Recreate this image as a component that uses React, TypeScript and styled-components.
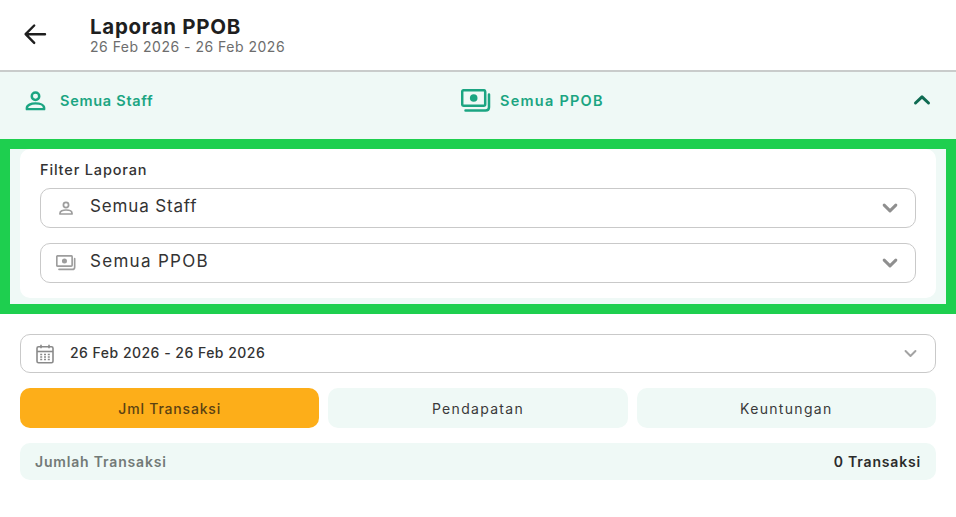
import React from "react";
import styled, { createGlobalStyle } from "styled-components";

const GlobalStyle = createGlobalStyle`
  html, body {
    margin: 0;
    padding: 0;
    background: #fff;
  }
  body {
    font-family: "Inter", "Liberation Sans", sans-serif;
  }
`;

const Page = styled.div`
  width: 956px;
  height: 517px;
  overflow: hidden;
  background: #fff;
`;

const Header = styled.header`
  height: 72px;
  display: flex;
  align-items: center;
  padding-left: 23px;
  box-sizing: border-box;
  border-bottom: 2px solid #c9cccb;
`;

const BackButton = styled.div`
  width: 24px;
  height: 24px;
  margin-right: 43px;
  margin-top: -3px;
  color: #1e1e1e;
`;

const HeaderText = styled.div`
  display: flex;
  flex-direction: column;
  margin-top: -1px;
`;

const Title = styled.div`
  font-size: 20.5px;
  line-height: 25px;
  font-weight: 700;
  color: #1f1f1f;
  letter-spacing: 0.72px;
`;

const Subtitle = styled.div`
  font-size: 14px;
  line-height: 16px;
  font-weight: 400;
  color: #6d6d6d;
  letter-spacing: 0.5px;
`;

const SummaryBar = styled.div`
  height: 67px;
  background: #eff9f6;
  display: flex;
  align-items: center;
  padding: 0 24px;
  box-sizing: border-box;
`;

const SummaryItem = styled.div<{ $width: number; $gap: number; $spacing: number }>`
  width: ${(p) => p.$width}px;
  display: flex;
  align-items: center;
  gap: ${(p) => p.$gap}px;
  color: #1ba582;
  font-size: 14.5px;
  font-weight: 600;
  letter-spacing: ${(p) => p.$spacing}px;
  margin-top: -10px;
`;

const Collapse = styled.div`
  margin-left: auto;
  margin-right: 0;
  margin-top: -11px;
  color: #0f6b52;
  width: 20px;
  height: 20px;
`;

const Frame = styled.section`
  height: 175px;
  box-sizing: border-box;
  border: 10px solid #1ecf4f;
  background: #eff9f6;
  padding: 0 10px 6px;
`;

const FilterCard = styled.div`
  height: 100%;
  box-sizing: border-box;
  background: #fff;
  border-radius: 10px;
  padding: 11px 20px 0;
`;

const FilterLabel = styled.div`
  font-size: 14.5px;
  line-height: 19px;
  font-weight: 500;
  color: #333;
  letter-spacing: 0.85px;
  margin-bottom: 9px;
`;

const Select = styled.div<{ $gap?: number; $pad?: number; $height?: number }>`
  height: ${(p) => p.$height ?? 40}px;
  box-sizing: border-box;
  border: 1.5px solid #c9c9c9;
  border-radius: 10px;
  background: #fff;
  display: flex;
  align-items: center;
  padding: 0 ${(p) => p.$pad ?? 15}px 0 14px;
  margin-bottom: ${(p) => p.$gap ?? 0}px;
`;

const SelectIcon = styled.div`
  width: 22px;
  height: 20px;
  color: #9d9d9d;
  display: flex;
  align-items: center;
  justify-content: center;
  margin-right: 13px;
`;

const SelectText = styled.div<{ $spacing: number }>`
  flex: 1;
  font-size: 17px;
  color: #333;
  letter-spacing: ${(p) => p.$spacing}px;
  margin-top: -5px;
`;

const Chevron = styled.div<{ $size: number; $color: string }>`
  width: ${(p) => p.$size}px;
  height: ${(p) => p.$size}px;
  color: ${(p) => p.$color};
`;

const Content = styled.div`
  padding: 20px 20px 0;
`;

const DateText = styled.div`
  flex: 1;
  font-size: 14px;
  font-weight: 500;
  color: #333;
  letter-spacing: 0.48px;
  margin-top: -2px;
`;

const DateIcon = styled(SelectIcon)`
  width: 20px;
  margin-right: 15px;
  color: #8a8a8a;
`;

const Tabs = styled.div`
  display: grid;
  grid-template-columns: repeat(3, 1fr);
  gap: 9px;
  margin: 15px 0;
`;

const Tab = styled.div<{ $active?: boolean }>`
  height: 40px;
  border-radius: 10px;
  display: flex;
  align-items: center;
  justify-content: center;
  font-size: 14px;
  font-weight: ${(p) => (p.$active ? 500 : 400)};
  letter-spacing: ${(p) => (p.$active ? 0.8 : 1.3)}px;
  background: ${(p) => (p.$active ? "#fdae19" : "#eff9f6")};
  color: ${(p) => (p.$active ? "#5b4212" : "#3a3a3a")};
`;

const TotalRow = styled.div`
  height: 37px;
  border-radius: 10px;
  background: #eff9f6;
  display: flex;
  align-items: center;
  justify-content: space-between;
  padding: 0 15px;
  font-size: 14px;
  letter-spacing: 0.82px;
`;

const TotalLabel = styled.span`
  font-weight: 600;
  color: #727a77;
`;

const TotalValue = styled.span`
  font-weight: 600;
  color: #2b2b2b;
`;

const PersonIcon = ({ size }: { size: number }) => (
  <svg width={size} height={size} viewBox="0 0 24 24" fill="none" stroke="currentColor" strokeWidth="2.6">
    <circle cx="12" cy="7.5" r="3.9" />
    <path d="M3 21v-1.2c0-3.2 4.4-4.8 9-4.8s9 1.6 9 4.8V21H3z" strokeLinejoin="round" />
  </svg>
);

const MoneyIcon = ({ width }: { width: number }) => (
  <svg width={width} height={width * 0.8} viewBox="0 0 30 24" fill="none" stroke="currentColor" strokeWidth="2.5">
    <rect x="1.2" y="1.2" width="23" height="15.6" rx="1.5" />
    <circle cx="12.7" cy="9" r="3.8" fill="currentColor" stroke="none" />
    <path d="M4.5 21.6h20c2 0 3.500-1.300 3.500-3.400V5.500" strokeLinecap="round" />
  </svg>
);

const CalendarIcon = () => (
  <svg width="18" height="20" viewBox="0 0 18 20" fill="none" stroke="currentColor">
    <rect x="1" y="2.8" width="16" height="16" rx="1.5" strokeWidth="1.6" />
    <path d="M1 7.5h16" strokeWidth="1.6" />
    <path d="M5 .8v3.4M13 .8v3.4" strokeWidth="1.6" />
    <path d="M4.2 10.5h2M8 10.500h2M11.800 10.500h2M4.200 13h2M8 13h2M11.800 13h2M4.200 15.500h2M8 15.500h2M11.800 15.500h2" strokeWidth="1.5" />
  </svg>
);

const ChevronDown = ({ weight }: { weight: number }) => (
  <svg width="100%" height="100%" viewBox="0 0 24 24" fill="none" stroke="currentColor" strokeWidth={weight} strokeLinecap="round" strokeLinejoin="round">
    <path d="M5 8.5l7 7 7-7" />
  </svg>
);

export default function App() {
  return (
    <>
      <GlobalStyle />
      <Page>
        <Header>
          <BackButton>
            <svg width="24" height="24" viewBox="0 0 24 24" fill="none" stroke="currentColor" strokeWidth="2.4" strokeLinecap="round" strokeLinejoin="round">
              <path d="M22 12.200H3M11.200 3.500L2.600 12.200l8.600 8.700" />
            </svg>
          </BackButton>
          <HeaderText>
            <Title>Laporan PPOB</Title>
            <Subtitle>26 Feb 2026 - 26 Feb 2026</Subtitle>
          </HeaderText>
        </Header>
        <SummaryBar>
          <SummaryItem $width={437} $gap={13} $spacing={0.72}>
            <PersonIcon size={23} />
            Semua Staff
          </SummaryItem>
          <SummaryItem $width={300} $gap={9} $spacing={1.25}>
            <MoneyIcon width={30} />
            Semua PPOB
          </SummaryItem>
          <Collapse>
            <svg width="20" height="20" viewBox="0 0 20 20" fill="none" stroke="currentColor" strokeWidth="3" strokeLinecap="round" strokeLinejoin="round">
              <path d="M3.500 13L10 6.800l6.500 6.200" />
            </svg>
          </Collapse>
        </SummaryBar>
        <Frame>
          <FilterCard>
            <FilterLabel>Filter Laporan</FilterLabel>
            <Select $gap={15}>
              <SelectIcon><PersonIcon size={16} /></SelectIcon>
              <SelectText $spacing={0.85}>Semua Staff</SelectText>
              <Chevron $size={20} $color="#8f8f8f"><ChevronDown weight={3.6} /></Chevron>
            </Select>
            <Select>
              <SelectIcon><MoneyIcon width={20} /></SelectIcon>
              <SelectText $spacing={1.3}>Semua PPOB</SelectText>
              <Chevron $size={20} $color="#8f8f8f"><ChevronDown weight={3.6} /></Chevron>
            </Select>
          </FilterCard>
        </Frame>
        <Content>
          <Select $pad={16} $height={39}>
            <DateIcon><CalendarIcon /></DateIcon>
            <DateText>26 Feb 2026 - 26 Feb 2026</DateText>
            <Chevron $size={17} $color="#a3a3a3"><ChevronDown weight={2.8} /></Chevron>
          </Select>
          <Tabs>
            <Tab $active>Jml Transaksi</Tab>
            <Tab>Pendapatan</Tab>
            <Tab>Keuntungan</Tab>
          </Tabs>
          <TotalRow>
            <TotalLabel>Jumlah Transaksi</TotalLabel>
            <TotalValue>0 Transaksi</TotalValue>
          </TotalRow>
        </Content>
      </Page>
    </>
  );
}
